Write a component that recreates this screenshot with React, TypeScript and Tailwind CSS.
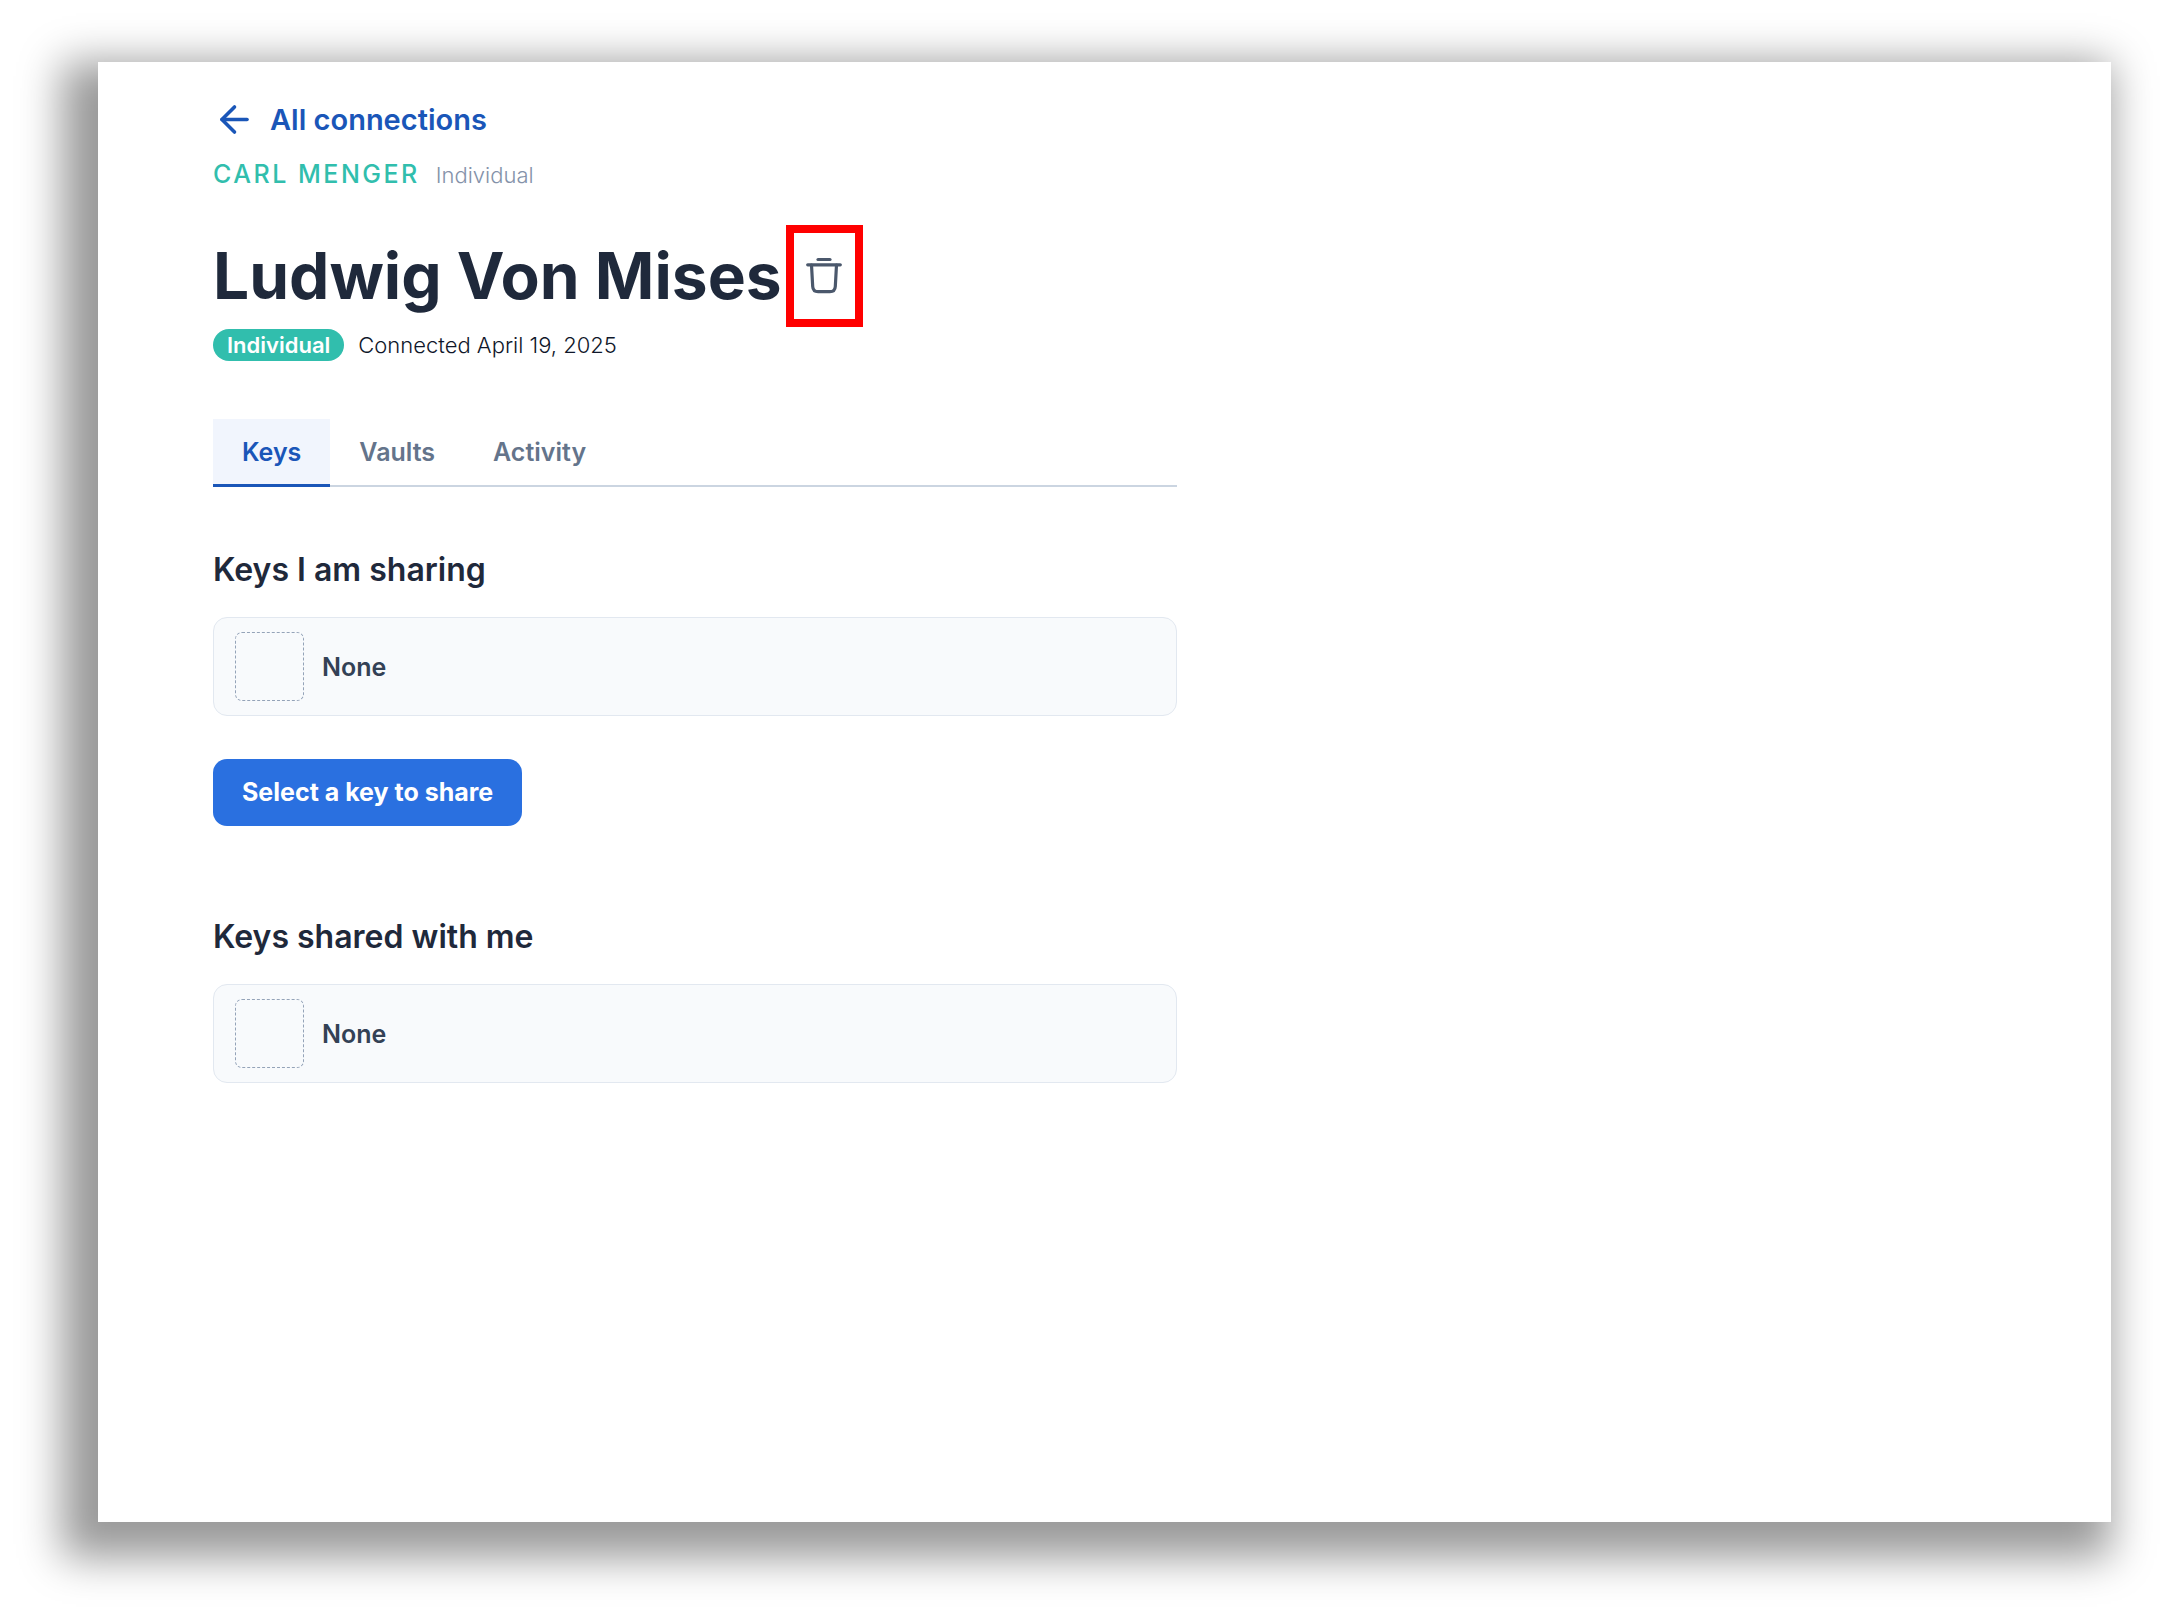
import React from "react";
import { ArrowLeft } from "lucide-react";

function TrashIcon() {
  return (
    <svg
      viewBox="0 0 36 38"
      className="h-[38px] w-9"
      fill="none"
      stroke="currentColor"
      strokeWidth="3.2"
      strokeLinecap="round"
      strokeLinejoin="round"
      aria-hidden="true"
    >
      <path d="M12 2.500h12" />
      <path d="M1.700 7.800h32.600" />
      <path d="M5.500 8l1.200 21.500c.2 3.600 2 5.200 5.400 5.200h11.800c3.400 0 5.200-1.600 5.400-5.200L30.500 8" />
    </svg>
  );
}

function EmptyKey() {
  return (
    <div className="flex items-center gap-[18px] rounded-[14px] border border-[#e2e8f0] bg-[#f8fafc] px-[21px] py-[14px]">
      <div className="size-[69px] rounded-[7px] border border-dashed border-[#94a3b8]" />
      <p className="text-[25px] leading-9 font-semibold text-[#334155]">None</p>
    </div>
  );
}

const tabs = ["Keys", "Vaults", "Activity"];

export default function App() {
  return (
    <div className="flex min-h-screen bg-white pt-[62px] pr-[62px] pb-[98px] pl-[98px] font-['Inter',sans-serif] text-[#1f293b]">
      <main className="flex-1 bg-white px-[115px] pt-9 shadow-[-18px_18px_40px_18px_rgba(0,0,0,0.4)]">
        <div className="w-full max-w-[964px]">
          <a href="#connections" className="flex w-fit items-center gap-[14px] text-[29px] leading-[43px] font-semibold text-[#1a56b8]">
            <ArrowLeft size={43} strokeWidth={2} aria-hidden="true" />
            All connections
          </a>
          <div className="mt-[15px] flex items-baseline gap-4">
            <p className="text-[25px] leading-9 font-medium tracking-widest text-[#31bead] uppercase">Carl Menger</p>
            <p className="text-[22px] leading-9 font-light text-[#8492a9]">Individual</p>
          </div>
          <div className="mt-8 flex items-center gap-1">
            <h1 className="text-[64px] leading-[72px] font-bold">Ludwig Von Mises</h1>
            <button
              type="button"
              aria-label="Delete connection"
              className="flex h-[102px] w-[77px] items-center justify-center border-8 border-[#ff0000] text-[#4b586c]"
            >
              <TrashIcon />
            </button>
          </div>
          <div className="mt-[2px] flex items-center gap-[14px]">
            <span className="rounded-full bg-[#31bead] px-[14px] text-[22px] leading-8 font-semibold text-white">Individual</span>
            <p className="text-[22px] leading-8 font-light text-[#0f172a]">Connected April 19, 2025</p>
          </div>
          <div role="tablist" className="mt-[58px] flex border-b-2 border-[#cbd5e1]">
            {tabs.map((tab, i) => (
              <button
                key={tab}
                type="button"
                role="tab"
                aria-selected={i === 0}
                className={
                  i === 0
                    ? "-mb-[2px] h-[68px] border-b-3 border-[#1a56b8] bg-[#f1f5fd] px-[29px] text-[25px] leading-9 font-semibold text-[#1a56b8]"
                    : "h-[66px] px-[29px] text-[25px] leading-9 font-semibold text-[#64748b]"
                }
              >
                {tab}
              </button>
            ))}
          </div>
          <section className="mt-[58px]">
            <h2 className="text-[32px] leading-[50px] font-semibold">Keys I am sharing</h2>
            <div className="mt-[22px]">
              <EmptyKey />
            </div>
            <button
              type="button"
              className="mt-[43px] rounded-[14px] bg-[#2a70e0] px-[29px] py-4 text-[25px] leading-[35px] font-bold text-white"
            >
              Select a key to share
            </button>
          </section>
          <section className="mt-[86px]">
            <h2 className="text-[32px] leading-[50px] font-semibold">Keys shared with me</h2>
            <div className="mt-[22px]">
              <EmptyKey />
            </div>
          </section>
        </div>
      </main>
    </div>
  );
}
